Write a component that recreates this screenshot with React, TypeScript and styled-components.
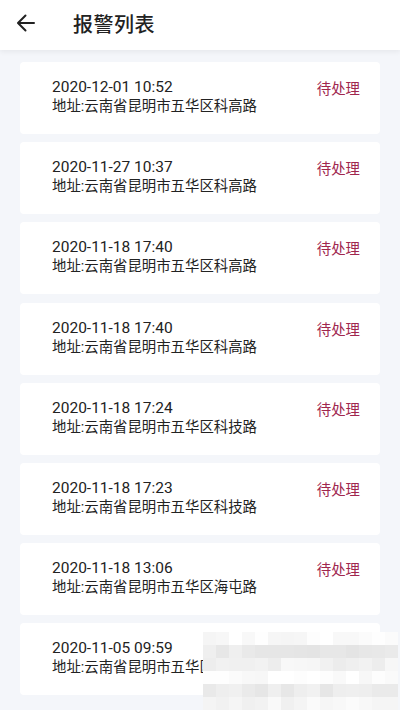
import React from "react";
import styled, { createGlobalStyle } from "styled-components";

const Global = createGlobalStyle`
  html, body { margin: 0; padding: 0; }
  body {
    background: #f4f6fa;
    font-family: Roboto, "Noto Sans CJK SC", "Noto Sans", sans-serif;
    overflow: hidden;
  }
`;

const Page = styled.div`
  position: relative;
  width: 400px;
  height: 710px;
  overflow: hidden;
  background: #f4f6fa;
`;

const Header = styled.header`
  height: 50px;
  background: #ffffff;
  display: flex;
  align-items: center;
  box-shadow: 0 2px 5px rgba(0, 0, 0, 0.06);
  position: relative;
  z-index: 1;
`;

const BackButton = styled.button`
  width: 54px;
  height: 50px;
  padding: 0 0 4px 16px;
  border: none;
  background: transparent;
  display: flex;
  align-items: center;
  cursor: pointer;
`;

const Title = styled.h1`
  margin: 0 0 4px 19px;
  font-size: 20px;
  font-weight: 500;
  color: #222222;
  letter-spacing: 0.5px;
  font-family: "Noto Sans CJK SC", sans-serif;
`;

const List = styled.div`
  display: flex;
  flex-direction: column;
  gap: 8.2px;
  padding: 12px 20px 0;
`;

const Card = styled.div`
  height: 72px;
  flex-shrink: 0;
  box-sizing: border-box;
  background: #ffffff;
  border-radius: 4px;
  padding: 15px 20px 0 32px;
  display: flex;
  justify-content: space-between;
  align-items: flex-start;
`;

const Info = styled.div`
  display: flex;
  flex-direction: column;
`;

const Line = styled.div<{ $size: number }>`
  font-size: ${(p) => p.$size}px;
  height: 20px;
  line-height: 20px;
  color: #222222;
  white-space: nowrap;
`;

const Status = styled.div`
  font-size: 14.4px;
  line-height: 21px;
  color: #a0264e;
  font-family: "Noto Sans CJK SC", sans-serif;
  margin-top: 0px;
`;

const Mosaic = styled.div`
  position: absolute;
  left: 203px;
  top: 632px;
  display: grid;
  grid-template-columns: repeat(15, 13px);
  grid-auto-rows: 13px;
  pointer-events: none;
  filter: blur(0.6px);
`;

const Cell = styled.div<{ $shade: number }>`
  background: ${(p) => `rgb(${p.$shade}, ${p.$shade}, ${p.$shade})`};
`;

const alerts = [
  { time: "2020-12-01 10:52", addr: "地址:云南省昆明市五华区科高路" },
  { time: "2020-11-27 10:37", addr: "地址:云南省昆明市五华区科高路" },
  { time: "2020-11-18 17:40", addr: "地址:云南省昆明市五华区科高路" },
  { time: "2020-11-18 17:40", addr: "地址:云南省昆明市五华区科高路" },
  { time: "2020-11-18 17:24", addr: "地址:云南省昆明市五华区科技路" },
  { time: "2020-11-18 17:23", addr: "地址:云南省昆明市五华区科技路" },
  { time: "2020-11-18 13:06", addr: "地址:云南省昆明市五华区海屯路" },
  { time: "2020-11-05 09:59", addr: "地址:云南省昆明市五华区科高路" },
];

const rowBase = [251, 234, 242, 253, 235, 245];

function shadeFor(r: number, c: number) {
  const n = Math.abs(Math.sin(r * 12.9898 + c * 78.233) * 43758.5453) % 1;
  const base = rowBase[r];
  return Math.round(Math.min(255, base + (n - 0.5) * 12));
}

export default function App() {
  const cells: React.ReactNode[] = [];
  for (let r = 0; r < 6; r++) {
    for (let c = 0; c < 15; c++) {
      cells.push(<Cell key={`${r}-${c}`} $shade={shadeFor(r, c)} />);
    }
  }
  return (
    <Page>
      <Global />
      <Header>
        <BackButton aria-label="back">
          <svg width="20" height="18" viewBox="0 0 20 18" fill="none">
            <path
              d="M18 9H2.5M9.5 1.5L2 9l7.5 7.5"
              stroke="#222"
              strokeWidth="2"
              strokeLinecap="round"
              strokeLinejoin="round"
            />
          </svg>
        </BackButton>
        <Title>报警列表</Title>
      </Header>
      <List>
        {alerts.map((a, i) => (
          <Card key={i}>
            <Info>
              <Line $size={15.5}>{a.time}</Line>
              <Line $size={14.4}>{a.addr}</Line>
            </Info>
            <Status>待处理</Status>
          </Card>
        ))}
      </List>
      <Mosaic>{cells}</Mosaic>
    </Page>
  );
}
